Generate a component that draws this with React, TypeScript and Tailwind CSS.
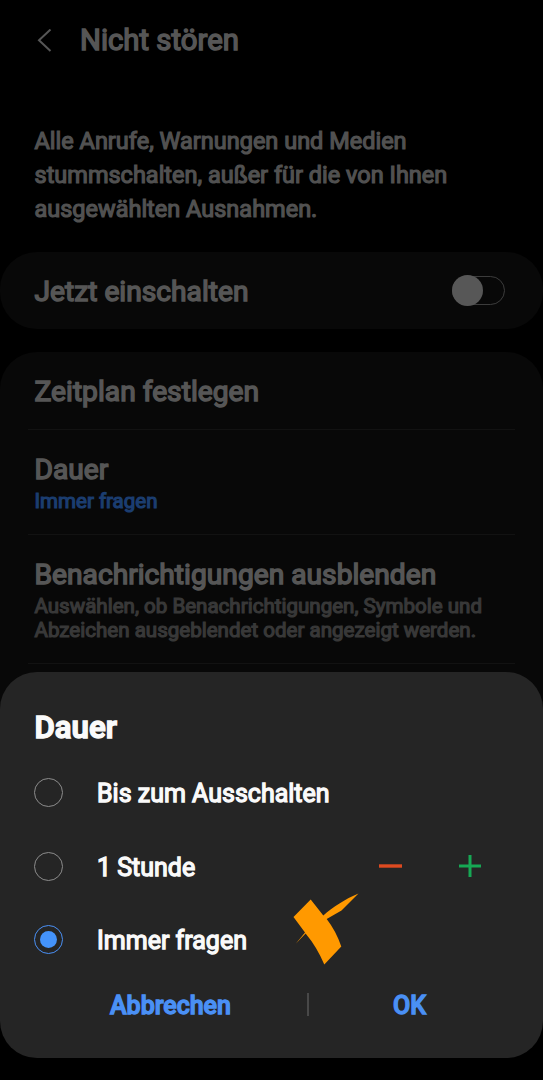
type DurationOption = {
  id: string
  label: string
  stepper?: boolean
}

const options: DurationOption[] = [
  { id: "until-off", label: "Bis zum Ausschalten" },
  { id: "one-hour", label: "1 Stunde", stepper: true },
  { id: "always-ask", label: "Immer fragen" },
]

const selectedId = "always-ask"

const Radio = ({ checked }: { checked: boolean }) => (
  <span
    className={
      checked
        ? "flex size-[29px] items-center justify-center rounded-full border-[1.5px] border-[#4a90f5]"
        : "flex size-[29px] items-center justify-center rounded-full border border-[#8c8c8c]"
    }
  >
    {checked ? <span className="size-[17px] rounded-full bg-[#4493fb]" /> : null}
  </span>
)

const Stepper = () => (
  <div className="ml-auto flex items-center gap-[57px] pr-[62px]">
    <svg className="h-[22px] w-[23px]" viewBox="0 0 23 22">
      <path d="M0 11H23" stroke="#de4a20" strokeWidth="3.4" />
    </svg>
    <svg className="h-[22px] w-[22px]" viewBox="0 0 22 22">
      <path d="M0 11H22M11 0V22" stroke="#16a854" strokeWidth="3" />
    </svg>
  </div>
)

const Marker = () => (
  <svg
    className="absolute top-[221px] left-[293px] h-[72px] w-[66px]"
    viewBox="0 0 66 72"
    fill="#ff9900"
  >
    <path d="M0.5 24L17.7 6.5L30.3 22.5C40 14 52 6 65.5 0.5L48.5 17.5L33.7 26Q43 38 48.3 53.5L31.3 71.5Q24 54 12.6 40.4L2.5 51L12 39.6Z" />
  </svg>
)

const SettingsPage = () => (
  <main className="text-[#565656] [-webkit-text-stroke:1.2px_currentColor]">
    <header className="flex h-[82px] items-center">
      <svg
        className="ml-[37px] h-6 w-4"
        viewBox="0 0 16 24"
        fill="none"
        stroke="currentColor"
        strokeWidth="2"
      >
        <path d="M13.5 0.5L2 11.2L13.5 22" />
      </svg>
      <h1 className="ml-[27px] text-[29.3px] [-webkit-text-stroke:1.5px_currentColor]">
        Nicht stören
      </h1>
    </header>
    <p className="mt-[42px] pl-[34.5px] text-[23.5px] leading-[34px] text-[#515151]">
      Alle Anrufe, Warnungen und Medien
      <br />
      stummschalten, außer für die von Ihnen
      <br />
      ausgewählten Ausnahmen.
    </p>
    <section className="mt-[25.5px] flex h-[77.5px] items-center justify-between rounded-[37px] bg-[#080808] pr-[38px] pl-[34.5px]">
      <h2 className="pt-[3.5px] text-[28.2px] [-webkit-text-stroke:1.5px_currentColor]">
        Jetzt einschalten
      </h2>
      <span className="flex h-[29px] w-[53px] items-center rounded-full border border-[#3c3c3c]">
        <span className="-ml-px size-[31px] shrink-0 rounded-full bg-[#575757]" />
      </span>
    </section>
    <section className="mt-[22.5px] h-[360px] rounded-t-[37px] bg-[#080808] px-7">
      <div className="flex h-[78.5px] items-center border-b border-[#121212] px-[6.5px] pt-[3.5px]">
        <h2 className="text-[28.2px] [-webkit-text-stroke:1.5px_currentColor]">
          Zeitplan festlegen
        </h2>
      </div>
      <div className="h-[105px] border-b border-[#121212] px-[6.5px] pt-[22px]">
        <h2 className="text-[28.2px] leading-9 [-webkit-text-stroke:1.5px_currentColor]">
          Dauer
        </h2>
        <p className="-mt-px text-[20.5px] leading-7 text-[#1b3d70]">
          Immer fragen
        </p>
      </div>
      <div className="h-[129px] border-b border-[#121212] px-[6.5px] pt-[22px]">
        <h2 className="text-[28.2px] leading-9 [-webkit-text-stroke:1.5px_currentColor]">
          Benachrichtigungen ausblenden
        </h2>
        <p className="pt-px text-[20.55px] leading-6 text-[#383838]">
          Auswählen, ob Benachrichtigungen, Symbole und
          <br />
          Abzeichen ausgeblendet oder angezeigt werden.
        </p>
      </div>
    </section>
  </main>
)

const DurationDialog = () => (
  <div
    role="dialog"
    className="absolute top-[672px] left-0 h-[386px] w-[543px] rounded-[37px] bg-[#252525] pt-9 text-[#fafafa] [-webkit-text-stroke:1.3px_currentColor]"
  >
    <h2 className="px-[34.5px] text-[31.2px] leading-10 font-semibold">
      Dauer
    </h2>
    <div className="pt-2">
      {options.map((option) => (
        <div
          key={option.id}
          className="flex h-[73.5px] items-center pl-[33.5px]"
        >
          <Radio checked={option.id === selectedId} />
          <span className="ml-[34.5px] pt-0.5 text-[25px]">{option.label}</span>
          {option.stepper ? <Stepper /> : null}
        </div>
      ))}
    </div>
    <div className="flex h-14 items-center text-[25px] font-medium text-[#4a90f5]">
      <button className="ml-[110px] w-[122px] pt-[3px] text-left">
        Abbrechen
      </button>
      <span className="ml-[75px] h-[23px] w-0.5 bg-[#484848]" />
      <button className="ml-[84px] pt-[3px]">OK</button>
    </div>
    <Marker />
  </div>
)

export default function App() {
  return (
    <div className="relative h-[1080px] w-[543px] overflow-hidden bg-black font-[Roboto,sans-serif]">
      <SettingsPage />
      <DurationDialog />
    </div>
  )
}
